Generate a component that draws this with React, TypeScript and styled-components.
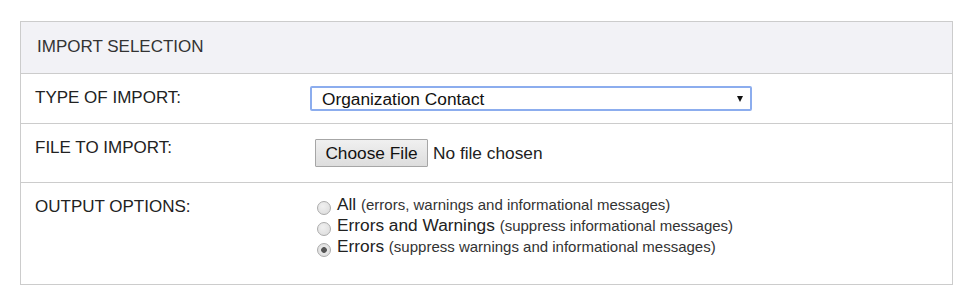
import React from "react";
import styled, { createGlobalStyle } from "styled-components";

const Global = createGlobalStyle`
  html, body { margin: 0; padding: 0; background: #ffffff; }
  body { font-family: Arial, "Liberation Sans", Helvetica, sans-serif; color: #333; }
`;

const Page = styled.div`
  padding: 21px 22px 0 20px;
`;

const Panel = styled.section`
  width: 933px;
  box-sizing: border-box;
  border: 1px solid #cccccc;
`;

const Header = styled.div`
  height: 52px;
  box-sizing: border-box;
  padding: 15px 16px 0;
  background: #f2f2f6;
  border-bottom: 1px solid #cccccc;
  font-size: 17px;
  color: #333;
  line-height: 20px;
`;

const Row = styled.div<{ $h: number; $last?: boolean }>`
  display: grid;
  grid-template-columns: 289px 1fr;
  height: ${(p) => p.$h}px;
  box-sizing: border-box;
  border-bottom: ${(p) => (p.$last ? "none" : "1px solid #cccccc")};
`;

const Label = styled.div`
  padding: 14px 0 0 14px;
  font-size: 17px;
  line-height: 20px;
  color: #222;
`;

const Value = styled.div<{ $pt: number }>`
  padding-top: ${(p) => p.$pt}px;
  font-size: 17px;
  color: #222;
`;

const SelectWrap = styled.div`
  position: relative;
  width: 442px;
  height: 25px;
`;

const Select = styled.select`
  appearance: none;
  -webkit-appearance: none;
  width: 100%;
  height: 100%;
  box-sizing: border-box;
  margin: 0;
  border: 2px solid #8cadee;
  border-radius: 2px;
  background: #ffffff;
  padding: 0 0 0 10px;
  font-family: Arial, "Liberation Sans", sans-serif;
  font-size: 17.3px;
  color: #111;
  outline: none;
`;

const Arrow = styled.span`
  position: absolute;
  right: 9px;
  top: 10px;
  width: 0;
  height: 0;
  border-left: 3.5px solid transparent;
  border-right: 3.5px solid transparent;
  border-top: 6px solid #111;
  pointer-events: none;
`;

const FileLine = styled.div`
  display: flex;
  align-items: center;
  gap: 5px;
  margin-left: 5px;
`;

const FileButton = styled.button`
  width: 113px;
  height: 28px;
  box-sizing: border-box;
  margin: 0;
  padding: 0;
  border: 1px solid #a6a6a6;
  border-radius: 1px;
  background: linear-gradient(#f0f0f0, #dddddd);
  font-family: Arial, "Liberation Sans", sans-serif;
  font-size: 17.3px;
  color: #111;
`;

const FileText = styled.span`
  font-size: 17.3px;
  color: #222;
`;

const RadioList = styled.div`
  display: flex;
  flex-direction: column;
  margin-left: 7px;
`;

const RadioLine = styled.label`
  display: block;
  line-height: 21px;
  height: 21px;
  font-size: 17.3px;
  color: #222;
  white-space: nowrap;
`;

const RadioDot = styled.span<{ $checked?: boolean }>`
  display: inline-block;
  width: 14px;
  height: 14px;
  box-sizing: border-box;
  border-radius: 50%;
  border: 1px solid #acacac;
  background: ${(p) =>
    p.$checked
      ? "radial-gradient(circle, #555 0, #555 2.5px, #e8e8e8 3.2px, #d8d8d8 100%)"
      : "radial-gradient(circle at 40% 35%, #f0f0f0 0, #dadada 100%)"};
  vertical-align: -5px;
  margin-right: 6px;
`;

const Hint = styled.span`
  font-size: 15px;
  color: #333;
`;

const options = [
  { main: "All", hint: "(errors, warnings and informational messages)", checked: false },
  { main: "Errors and Warnings", hint: "(suppress informational messages)", checked: false },
  { main: "Errors", hint: "(suppress warnings and informational messages)", checked: true },
];

export default function App() {
  return (
    <>
      <Global />
      <Page>
        <Panel>
          <Header>IMPORT SELECTION</Header>
          <Row $h={50}>
            <Label>TYPE OF IMPORT:</Label>
            <Value $pt={12}>
              <SelectWrap>
                <Select defaultValue="oc">
                  <option value="oc">Organization Contact</option>
                </Select>
                <Arrow />
              </SelectWrap>
            </Value>
          </Row>
          <Row $h={59}>
            <Label>FILE TO IMPORT:</Label>
            <Value $pt={15}>
              <FileLine>
                <FileButton type="button">Choose File</FileButton>
                <FileText>No file chosen</FileText>
              </FileLine>
            </Value>
          </Row>
          <Row $h={101} $last>
            <Label>OUTPUT OPTIONS:</Label>
            <Value $pt={11}>
              <RadioList>
                {options.map((o) => (
                  <RadioLine key={o.main}>
                    <RadioDot $checked={o.checked} />
                    {o.main} <Hint>{o.hint}</Hint>
                  </RadioLine>
                ))}
              </RadioList>
            </Value>
          </Row>
        </Panel>
      </Page>
    </>
  );
}
